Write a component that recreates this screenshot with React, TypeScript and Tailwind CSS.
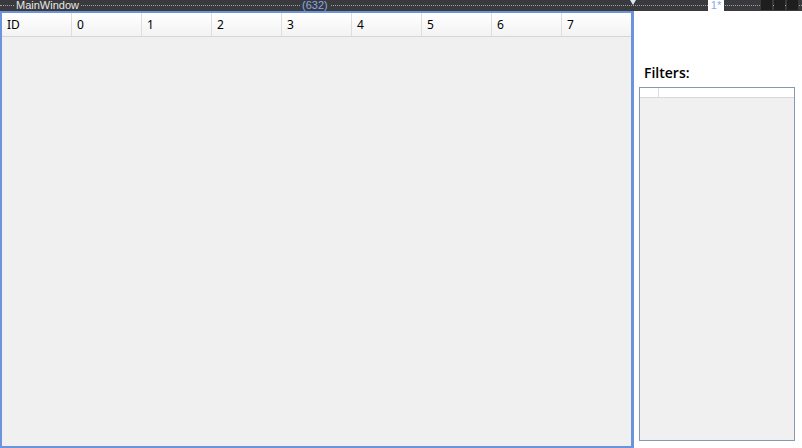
const columns = ["ID", "0", "1", "2", "3", "4", "5", "6", "7"];

function TopBar() {
  return (
    <div className="relative h-[11px] bg-[#3a3a3c]">
      {/* dotted guide line */}
      <div className="absolute left-0 right-0 top-[5px] border-t border-dotted border-[#9aa3b0]" />
      <span className="absolute left-[14px] top-0 h-[11px] px-[2px] bg-[#3a3a3c] text-[11px] leading-[11px] text-[#e8e8e8] font-['Liberation_Sans',sans-serif]">
        MainWindow
      </span>
      <span className="absolute left-[300px] top-0 h-[11px] px-[2px] bg-[#3a3a3c] text-[11px] leading-[11px] text-[#86a9ea] font-['Liberation_Sans',sans-serif]">
        (632)
      </span>
      <div className="absolute left-[630px] top-0 w-0 h-0 border-l-[3px] border-r-[3px] border-t-[5px] border-l-transparent border-r-transparent border-t-[#dde6f5]" />
      <span className="absolute left-[708px] top-0 h-[11px] w-[16px] bg-white text-[11px] leading-[11px] text-[#86a9ea] text-center font-['Liberation_Sans',sans-serif]">
        1*
      </span>
      <div className="absolute left-[761px] top-0 flex gap-[2px]">
        <div className="w-[11px] h-[10px] bg-[#1e1e1e]" />
        <div className="w-[11px] h-[10px] bg-[#1e1e1e]" />
        <div className="w-[11px] h-[10px] bg-[#1e1e1e]" />
      </div>
    </div>
  );
}

function MainGrid() {
  return (
    <div className="w-[634px] h-full flex flex-col border-2 border-r-[3px] border-[#6b94dc] bg-[#f0f0f0]">
      <div className="flex h-[24px] border-b border-[#d5d5d5] bg-gradient-to-b from-white to-[#f3f3f3]">
        {columns.map((c, i) => (
          <div
            key={c}
            className={`w-[70px] shrink-0 pl-[5px] flex items-center text-[12px] text-black antialiased font-['Noto_Sans',sans-serif] ${
              i < columns.length - 1 ? "border-r border-[#dedede]" : ""
            }`}
          >
            {c}
          </div>
        ))}
      </div>
      <div className="flex-1" />
    </div>
  );
}

function FilterPanel() {
  return (
    <div className="flex-1 bg-white flex flex-col pl-[5px] pr-[7px] pb-[7px]">
      <div className="pt-[52px] pl-[5px] h-[76px] text-[14px] leading-[20px] font-semibold text-black font-['Open_Sans',sans-serif]">
        Filters:
      </div>
      <div className="flex-1 border border-[#8599b0] bg-[#f0f0f0] flex flex-col">
        <div className="flex h-[10px] bg-white border-b border-[#d8d8d8]">
          <div className="w-[19px] border-r border-[#dedede]" />
          <div className="flex-1" />
        </div>
      </div>
    </div>
  );
}

export default function App() {
  return (
    <div className="w-[802px] h-[448px] flex flex-col bg-white overflow-hidden">
      <TopBar />
      <div className="flex flex-1 min-h-0">
        <MainGrid />
        <FilterPanel />
      </div>
    </div>
  );
}
